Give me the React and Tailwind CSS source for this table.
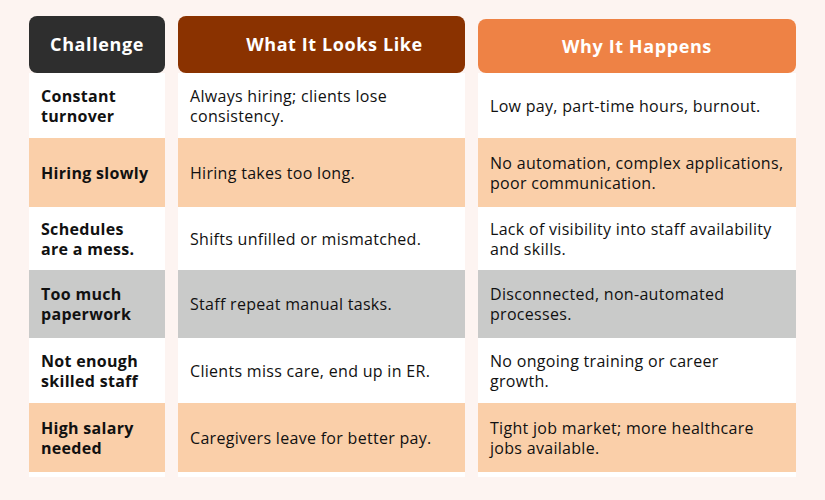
import React from "react";

const rows = [
  { c: ["Constant", "turnover"], w: ["Always hiring; clients lose", "consistency."], y: ["Low pay, part-time hours, burnout."], bg: "bg-white", h: "h-[65px]" },
  { c: ["Hiring slowly"], w: ["Hiring takes too long."], y: ["No automation, complex applications,", "poor communication."], bg: "bg-[#facfa9]", h: "h-[69px]" },
  { c: ["Schedules", "are a mess."], w: ["Shifts unfilled or mismatched."], y: ["Lack of visibility into staff availability", "and skills."], bg: "bg-white", h: "h-[63px]" },
  { c: ["Too much", "paperwork"], w: ["Staff repeat manual tasks."], y: ["Disconnected, non-automated", "processes."], bg: "bg-[#c9cac9]", h: "h-[68px]" },
  { c: ["Not enough", "skilled staff"], w: ["Clients miss care, end up in ER."], y: ["No ongoing training or career", "growth."], bg: "bg-white", h: "h-[65px]" },
  { c: ["High salary", "needed"], w: ["Caregivers leave for better pay."], y: ["Tight job market; more healthcare", "jobs available."], bg: "bg-[#facfa9]", h: "h-[69px]" },
];

const font = { fontFamily: '"Open Sans", "Noto Sans", sans-serif' };

function Column({ title, headerBg, width, headerClass, field, bold }) {
  return (
    <div className={`flex flex-col ${width}`}>
      <div className={`${headerBg} ${headerClass} rounded-[8px] flex items-center justify-center text-white font-bold text-[18px] tracking-[0.6px]`}>
        {title}
      </div>
      {rows.map((r, i) => (
        <div key={i} className={`${r.bg} ${r.h} flex items-center pl-[12px] pr-[2px]`}>
          <div className={`whitespace-nowrap text-[16px] leading-[20px] tracking-[0.3px] text-[#111111] ${bold ? "font-bold" : "font-normal"}`}>
            {r[field].map((line, j) => (
              <div key={j}>{line}</div>
            ))}
          </div>
        </div>
      ))}
      <div className="bg-white h-[5px]" />
    </div>
  );
}

export default function App() {
  return (
    <div className="w-[825px] h-[500px] bg-[#fdf4f1] flex items-start pl-[29px] pt-[16px] gap-[13px]" style={font}>
      <Column title="Challenge" headerBg="bg-[#2e2e2e]" width="w-[136px]" headerClass="h-[57px]" field="c" bold />
      <Column title="What It Looks Like" headerBg="bg-[#8a3200]" width="w-[287px]" headerClass="h-[57px] pl-[26px]" field="w" />
      <div className="flex flex-col w-[318px] pt-[3px]">
        <Column title="Why It Happens" headerBg="bg-[#ee8245]" width="w-[318px]" headerClass="h-[54px]" field="y" />
      </div>
    </div>
  );
}
